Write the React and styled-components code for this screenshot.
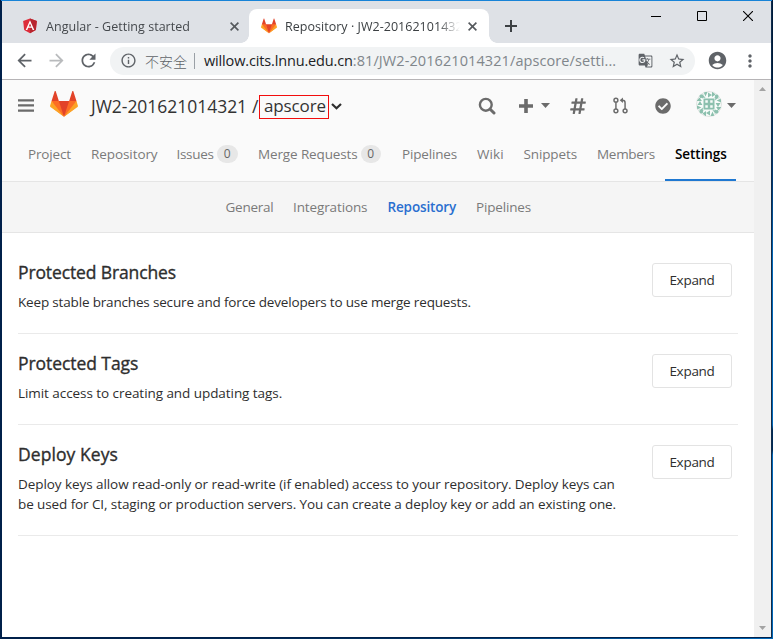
import React from "react";
import styled, { createGlobalStyle } from "styled-components";
import {
  MdArrowBack,
  MdArrowForward,
  MdRefresh,
  MdInfoOutline,
  MdStarBorder,
  MdGTranslate,
  MdAccountCircle,
  MdMoreVert,
} from "react-icons/md";
import { FaHashtag, FaCheckCircle } from "react-icons/fa";

const GlobalStyle = createGlobalStyle`
  *, *::before, *::after { box-sizing: border-box; }
  body {
    margin: 0;
    overflow: hidden;
    font-family: "Open Sans", "Noto Sans", "Noto Sans CJK SC", sans-serif;
    font-size: 13.5px;
    line-height: 20px;
    color: #2e2e2e;
  }
  svg { display: block; flex: none; }
`;

const Desktop = styled.div`
  width: 773px;
  height: 639px;
  padding: 1px 2px 2px 2px;
  background:
    linear-gradient(#0f2c4c, #0f2c4c) 771px 1px / 1px 637px no-repeat,
    linear-gradient(#001b3a 0 66px, #003a75 180px, #0067b8 260px 425px, #002a55 430px 450px, #0067b8 455px) 772px 0 / 1px 639px no-repeat,
    linear-gradient(#1883d7, #1883d7) 1px 0 / 771px 1px no-repeat,
    linear-gradient(90deg, #00204a 0 60px, #00305f 400px, #0067b8) 0 638px / 773px 1px no-repeat,
    #00204a;
`;

const Window = styled.div`
  width: 769px;
  height: 636px;
  display: flex;
  flex-direction: column;
  background: #fff;
`;

const TabStrip = styled.div`
  height: 42px;
  padding-top: 8px;
  display: flex;
  background: #dee1e6;
`;

const Tab = styled.div`
  position: relative;
  height: 34px;
  width: ${(p) => (p.$active ? 240 : 247)}px;
  padding: 0 ${(p) => (p.$active ? "12px 0 12px" : "10px 0 20px")};
  display: flex;
  align-items: center;
  border-radius: 8px 8px 0 0;
  background: ${(p) => (p.$active ? "#fff" : "transparent")};
  color: ${(p) => (p.$active ? "#3c4043" : "#45494d")};

  &::before, &::after {
    content: "";
    display: ${(p) => (p.$active ? "block" : "none")};
    position: absolute;
    bottom: 0;
    width: 8px;
    height: 8px;
  }
  &::before {
    left: -8px;
    background: radial-gradient(circle at 0 0, transparent 7.5px, #fff 8px);
  }
  &::after {
    right: -8px;
    background: radial-gradient(circle at 100% 0, transparent 7.5px, #fff 8px);
  }
`;

const TabTitle = styled.span`
  flex: 1;
  min-width: 0;
  margin: 0 8px;
  padding-top: 1px;
  font-size: 12.5px;
  line-height: 18px;
  letter-spacing: 0.03px;
  overflow: hidden;
  white-space: nowrap;
  mask-image: linear-gradient(90deg, #000 calc(100% - 22px), transparent);
`;

const NewTab = styled.div`
  width: 44px;
  height: 34px;
  display: grid;
  place-items: center;
`;

const WindowControls = styled.div`
  margin: -8px 0 0 auto;
  height: 29px;
  display: flex;
`;

const WindowButton = styled.div`
  width: 46px;
  display: grid;
  place-items: center;
`;

const Toolbar = styled.div`
  height: 37px;
  display: flex;
  align-items: center;
  padding: 0 11px 1px 12px;
  border-bottom: 1px solid #b6b4b6;
  color: #5f6368;
`;

const ToolButton = styled.div`
  flex: none;
  width: ${(p) => p.$width || 32}px;
  display: grid;
  place-items: center;
  color: ${(p) => (p.$dim ? "#b9bbbd" : "inherit")};
`;

const Omnibox = styled.div`
  flex: none;
  width: 585px;
  height: 28px;
  padding: 0 2px 0 10px;
  display: flex;
  align-items: center;
  border-radius: 14px;
  background: #f1f3f4;
  white-space: nowrap;
`;

const Insecure = styled.span`
  width: 50px;
  margin-left: 8px;
  padding-right: 7px;
  font: 300 14px/16px "Noto Sans CJK SC", sans-serif;
  border-right: 1px solid #9aa0a6;
`;

const Url = styled.span`
  flex: 1;
  margin-left: 9px;
  font-size: 14.5px;
  letter-spacing: 0.09px;
  color: #80868b;
`;

const Host = styled.span`
  letter-spacing: -0.15px;
  color: #202124;
`;

const Viewport = styled.div`
  flex: 1;
  min-height: 0;
  display: flex;
`;

const Page = styled.div`
  width: 752px;
`;

const Scrollbar = styled.div`
  width: 17px;
  padding: 7px 0 7px;
  display: flex;
  flex-direction: column;
  justify-content: space-between;
  align-items: center;
  background: #f0f0f0;
`;

const Header = styled.header`
  height: 102px;
  background: #fafafa;
  border-bottom: 1px solid #e5e5e5;
`;

const TopBar = styled.div`
  height: 51px;
  padding: 0 18px 0 16px;
  display: flex;
  align-items: center;
  color: #6b6b6b;
`;

const Logo = styled.div`
  margin: -3px 0 0 16px;
`;

const ProjectTitle = styled.h1`
  margin: 0 0 0 13px;
  display: flex;
  align-items: center;
  font-size: 17.5px;
  font-weight: 400;
  line-height: 24px;
  color: #333;
`;

const Group = styled.span`
  width: 161px;
  letter-spacing: -0.03px;
`;

const Separator = styled.span`
  width: 7px;
`;

const ProjectName = styled.span`
  width: 70px;
  height: 24px;
  margin: 3px 2px 0 0;
  padding-left: 4px;
  border: 1px solid #f20d0d;
  font-size: 17px;
  line-height: 19px;
  letter-spacing: -0.12px;
`;

const TitleArrow = styled.svg`
  margin-top: 1px;
`;

const Actions = styled.div`
  margin-left: auto;
  display: flex;
  align-items: center;
`;

const Action = styled.div`
  width: ${(p) => p.$width}px;
  height: 30px;
  display: grid;
  place-items: center;
`;

const AvatarAction = styled(Action)`
  margin-top: -3px;
`;

const MainNav = styled.nav`
  height: 50px;
  padding-left: 16px;
  display: flex;
`;

const NavItem = styled.a`
  width: ${(p) => p.$width}px;
  height: 50px;
  padding: 13px 0 0 10px;
  white-space: nowrap;
  display: flex;
  letter-spacing: ${(p) => p.$track || 0}px;
  font-weight: ${(p) => (p.$active ? 600 : 400)};
  color: ${(p) => (p.$active ? "#000" : "#7a7a7a")};
  border-bottom: ${(p) => (p.$active ? "2px solid #1f78d1" : "0")};
`;

const Badge = styled.span`
  width: ${(p) => p.$width}px;
  height: 18px;
  margin: 1px 0 0 3px;
  border-radius: 9px;
  background: #e7e7e7;
  color: #666;
  font-size: 12px;
  line-height: 18px;
  text-align: center;
`;

const SubNav = styled.nav`
  height: 51px;
  padding: 15px 0 0 223.5px;
  display: flex;
  background: #f5f5f5;
  border-bottom: 1px solid #e5e5e5;
`;

const SubItem = styled.a`
  width: ${(p) => p.$width}px;
  white-space: nowrap;
  letter-spacing: ${(p) => p.$track || 0}px;
  font-weight: ${(p) => (p.$active ? 600 : 400)};
  color: ${(p) => (p.$active ? "#2a6fd0" : "#7a7a7a")};
`;

const Content = styled.main`
  padding: 10px 16px 0;
`;

const Section = styled.section`
  padding: 20px 6px 21px 0;
  display: flex;
  justify-content: space-between;
  align-items: flex-start;
  border-bottom: 1px solid #eaeaea;
`;

const Heading = styled.h2`
  margin: -1px 0 10px;
  font-size: 17.5px;
  font-weight: 400;
  line-height: 20px;
  letter-spacing: ${(p) => p.$track}px;
  -webkit-text-stroke: 0.35px #2e2e2e;
`;

const Line = styled.span`
  display: block;
  white-space: nowrap;
  letter-spacing: ${(p) => p.$track}px;
`;

const ExpandButton = styled.button`
  width: 80px;
  height: 34px;
  padding: 0;
  border: 1px solid #e3e3e3;
  border-radius: 3px;
  background: #fff;
  color: #2e2e2e;
  font: inherit;
  letter-spacing: -0.28px;
`;

const Tanuki = ({ size }) => (
  <svg width={size} height={size} viewBox="0 0 36 36">
    <path fill="#e24329" d="M2 14l9.38 9v-9l-4-12.28c-.205-.632-1.176-.632-1.38 0z" />
    <path fill="#e24329" d="M34 14l-9.38 9v-9l4-12.28c.205-.632 1.176-.632 1.38 0z" />
    <path fill="#e24329" d="M18 34.38 3 14h30z" />
    <path fill="#fc6d26" d="M18 34.38 11.38 14H2l4 11z" />
    <path fill="#fc6d26" d="M18 34.38 24.62 14H34l-4 11z" />
    <path fill="#fca326" d="M2 14L.1 20.16c-.18.565 0 1.2.5 1.56l17.42 12.66z" />
    <path fill="#fca326" d="M34 14l1.9 6.16c.18.565 0 1.2-.5 1.56L18 34.38z" />
  </svg>
);

const AngularMark = () => (
  <svg width="16" height="16" viewBox="0 0 250 250">
    <path fill="#dd2c3a" d="M125 8 18 46l16 142 91 50 91-50 16-142z" />
    <path fill="#b8262f" d="M125 8v230l91-50 16-142z" />
    <path fill="#fff" d="M125 36 58 187h25l13-34h58l13 34h25zm20 96h-40l20-48z" />
  </svg>
);

const CloseGlyph = ({ size = 9 }) => (
  <svg width={size} height={size} viewBox="0 0 9 9" stroke="#55595d" strokeWidth="1.6">
    <path d="M.6.6l7.8 7.8M8.4.6.6 8.4" />
  </svg>
);

const Caret = ({ width = 9 }) => (
  <svg width={width} height="5" viewBox="0 0 9 5">
    <path fill="currentColor" d="M0 0h9L4.5 5z" />
  </svg>
);

const ScrollArrow = ({ up }) => (
  <svg width="7" height="4" viewBox="0 0 7 4">
    <path fill="#a3a3a3" d={up ? "M0 4h7L3.5 0z" : "M0 0h7L3.5 4z"} />
  </svg>
);

const Bars = () => (
  <svg width="16" height="13" viewBox="0 0 16 13">
    <path fill="currentColor" d="M0 .2h16v2.3H0zM0 5.3h16v2.3H0zM0 10.4h16v2.3H0z" />
  </svg>
);

const SearchGlyph = () => (
  <svg width="18" height="18" viewBox="0 0 18 18" fill="none" stroke="currentColor">
    <circle cx="7.8" cy="7.8" r="5.9" strokeWidth="2.4" />
    <path d="M12.2 12.2l3.8 3.8" strokeWidth="3" strokeLinecap="round" />
  </svg>
);

const PlusGlyph = () => (
  <svg width="14" height="14" viewBox="0 0 14 14">
    <path fill="currentColor" d="M5.2 0h3.6v5.2H14v3.6H8.8V14H5.2V8.8H0V5.2h5.2z" />
  </svg>
);

const MergeGlyph = () => (
  <svg width="15" height="17" viewBox="0 0 15.4 17" fill="none" stroke="currentColor" strokeWidth="1.5">
    <circle cx="3" cy="3" r="2" />
    <circle cx="3" cy="14" r="2" />
    <circle cx="12.4" cy="14" r="2" />
    <path d="M3 5v7M12.4 12V5.6c0-1.6-.9-2.4-2.6-2.4H8.6" />
    <path d="M10.2.4v5.6L6.9 3.2z" fill="currentColor" stroke="none" />
  </svg>
);

const Identicon = () => (
  <svg width="26" height="26" viewBox="0 0 26 26">
    <defs>
      <clipPath id="round"><circle cx="13" cy="13" r="12.6" /></clipPath>
    </defs>
    <circle cx="13" cy="13" r="12.5" fill="#f7fbf9" stroke="#dfe3e1" />
    <g clipPath="url(#round)" fill="#8cc0ae">
      <path d="M7.5 7.5h11v11h-11z" />
      {[0, 90, 180, 270].map((angle) => (
        <g key={angle} transform={`rotate(${angle} 13 13)`}>
          <path d="M7.5 1l4 0-2 4.4zM12 1.5l4 2.5-4 2.4zM16 .5l3.5 3-3.5 2.4zM2.5 3l5 .8-3 3.6zM20 3.6l2.6 3.8-4.2-.6zM7 4.2l2.6 2.6H5.6z" />
        </g>
      ))}
      <path fill="#f7fbf9" d="M9.3 9.3h2.5v2.5H9.3zM14.2 9.3h2.5v2.5h-2.5zM9.3 14.2h2.5v2.5H9.3zM14.2 14.2h2.5v2.5h-2.5z" />
    </g>
  </svg>
);

const navItems = [
  { label: "Project", width: 63, track: -0.15 },
  { label: "Repository", width: 85.5, track: -0.08 },
  { label: "Issues", width: 81.5, track: -0.3, count: 0, badge: 21 },
  { label: "Merge Requests", width: 144, track: -0.13, count: 0, badge: 20 },
  { label: "Pipelines", width: 75, track: -0.17 },
  { label: "Wiki", width: 46.5, track: 0.1 },
  { label: "Snippets", width: 73.5, track: -0.12 },
  { label: "Members", width: 78, track: -0.29 },
  { label: "Settings", width: 71, track: -0.06, active: true },
];

const subItems = [
  { label: "General", width: 67.5, track: -0.24 },
  { label: "Integrations", width: 94.5, track: -0.12 },
  { label: "Repository", width: 88.5, track: -0.14, active: true },
  { label: "Pipelines", width: 70, track: -0.17 },
];

const sections = [
  {
    title: "Protected Branches",
    track: -0.12,
    lines: [["Keep stable branches secure and force developers to use merge requests.", -0.17]],
  },
  {
    title: "Protected Tags",
    track: -0.06,
    lines: [["Limit access to creating and updating tags.", -0.06]],
  },
  {
    title: "Deploy Keys",
    track: 0.08,
    lines: [
      ["Deploy keys allow read-only or read-write (if enabled) access to your repository. Deploy keys can", -0.07],
      ["be used for CI, staging or production servers. You can create a deploy key or add an existing one.", -0.095],
    ],
  },
];

export default function App() {
  return (
    <Desktop>
      <GlobalStyle />
      <Window>
        <TabStrip>
          <Tab>
            <AngularMark />
            <TabTitle>Angular - Getting started</TabTitle>
            <CloseGlyph />
          </Tab>
          <Tab $active>
            <Tanuki size={16} />
            <TabTitle>Repository · JW2-201621014321</TabTitle>
            <CloseGlyph />
          </Tab>
          <NewTab>
            <svg width="12" height="12" viewBox="0 0 12 12">
              <path d="M5 0h2v5h5v2H7v5H5V7H0V5h5z" fill="#3c4043" />
            </svg>
          </NewTab>
          <WindowControls>
            <WindowButton>
              <svg width="10" height="10" viewBox="0 0 10 10"><path d="M0 5h10v1H0z" /></svg>
            </WindowButton>
            <WindowButton>
              <svg width="10" height="10" viewBox="0 0 10 10">
                <path d="M.5.5h9v9h-9z" fill="none" stroke="#000" />
              </svg>
            </WindowButton>
            <WindowButton>
              <svg width="10" height="10" viewBox="0 0 10 10">
                <path d="M0 0l10 10M10 0 0 10" stroke="#000" strokeWidth="1.1" />
              </svg>
            </WindowButton>
          </WindowControls>
        </TabStrip>
        <Toolbar>
          <ToolButton $width={20}><MdArrowBack size={21} /></ToolButton>
          <ToolButton $width={44} $dim><MdArrowForward size={21} /></ToolButton>
          <ToolButton $width={20}><MdRefresh size={21} /></ToolButton>
          <ToolButton $width={12} />
          <Omnibox>
            <MdInfoOutline size={17} />
            <Insecure>不安全</Insecure>
            <Url><Host>willow.cits.lnnu.edu.cn</Host>:81/JW2-201621014321/apscore/setti...</Url>
            <ToolButton $width={32}><MdGTranslate size={15} /></ToolButton>
            <ToolButton $width={32}><MdStarBorder size={18} /></ToolButton>
          </Omnibox>
          <ToolButton $width={44}><MdAccountCircle size={21} /></ToolButton>
          <ToolButton $width={21}><MdMoreVert size={20} /></ToolButton>
        </Toolbar>
        <Viewport>
          <Page>
            <Header>
              <TopBar>
                <Bars />
                <Logo><Tanuki size={28} /></Logo>
                <ProjectTitle>
                  <Group>JW2-201621014321</Group>
                  <Separator>/</Separator>
                  <ProjectName>apscore</ProjectName>
                  <TitleArrow width="11" height="7" viewBox="0 0 11 7">
                    <path d="M1 1l4.5 4.3L10 1" fill="none" stroke="#2e2e2e" strokeWidth="2.2" />
                  </TitleArrow>
                </ProjectTitle>
                <Actions>
                  <Action $width={46}><SearchGlyph /></Action>
                  <Action $width={31}><PlusGlyph /></Action>
                  <Action $width={9}><Caret /></Action>
                  <Action $width={56}><FaHashtag size={18} /></Action>
                  <Action $width={29}><MergeGlyph /></Action>
                  <Action $width={56}><FaCheckCircle size={16} /></Action>
                  <AvatarAction $width={36}><Identicon /></AvatarAction>
                  <Action $width={9}><Caret /></Action>
                </Actions>
              </TopBar>
              <MainNav>
                {navItems.map((item) => (
                  <NavItem key={item.label} $width={item.width} $track={item.track} $active={item.active}>
                    {item.label}
                    {item.badge && <Badge $width={item.badge}>{item.count}</Badge>}
                  </NavItem>
                ))}
              </MainNav>
            </Header>
            <SubNav>
              {subItems.map((item) => (
                <SubItem key={item.label} $width={item.width} $track={item.track} $active={item.active}>
                  {item.label}
                </SubItem>
              ))}
            </SubNav>
            <Content>
              {sections.map((section) => (
                <Section key={section.title}>
                  <div>
                    <Heading $track={section.track}>{section.title}</Heading>
                    {section.lines.map(([text, track]) => (
                      <Line key={text} $track={track}>{text}</Line>
                    ))}
                  </div>
                  <ExpandButton>Expand</ExpandButton>
                </Section>
              ))}
            </Content>
          </Page>
          <Scrollbar>
            <ScrollArrow up />
            <ScrollArrow />
          </Scrollbar>
        </Viewport>
      </Window>
    </Desktop>
  );
}
